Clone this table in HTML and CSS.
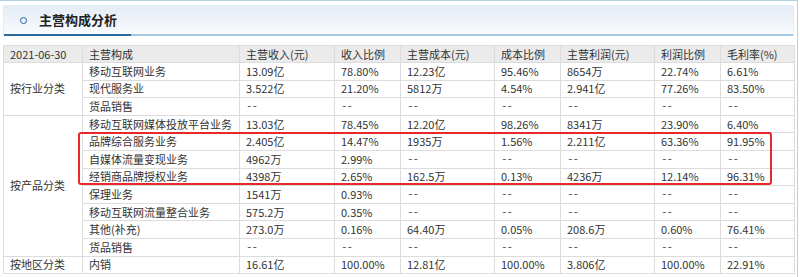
FILE: index.html
```html
<!DOCTYPE html>
<html lang="zh-CN">
<head>
<meta charset="utf-8">
<title>主营构成分析</title>
<link rel="stylesheet" href="styles.css">
</head>
<body>
<div class="frame">
  <div class="section-head">
    <span class="ring"></span>
    <h2 class="title">主营构成分析</h2>
  </div>
  <table class="grid">
    <colgroup>
      <col style="width:79px"><col style="width:157px"><col style="width:95px"><col style="width:66px"><col style="width:94px"><col style="width:66px"><col style="width:94px"><col style="width:66px"><col style="width:74px">
    </colgroup>
    <thead>
      <tr class="head-row"><th>2021-06-30</th><th>主营构成</th><th>主营收入(元)</th><th>收入比例</th><th>主营成本(元)</th><th>成本比例</th><th>主营利润(元)</th><th>利润比例</th><th>毛利率(%)</th></tr>
    </thead>
    <tbody>
      <tr><td class="cat" rowspan="3">按行业分类</td><td>移动互联网业务</td><td>13.09亿</td><td>78.80%</td><td>12.23亿</td><td>95.46%</td><td>8654万</td><td>22.74%</td><td>6.61%</td></tr>
      <tr><td>现代服务业</td><td>3.522亿</td><td>21.20%</td><td>5812万</td><td>4.54%</td><td>2.941亿</td><td>77.26%</td><td>83.50%</td></tr>
      <tr><td>货品销售</td><td class="nil">--</td><td class="nil">--</td><td class="nil">--</td><td class="nil">--</td><td class="nil">--</td><td class="nil">--</td><td class="nil">--</td></tr>
      <tr><td class="cat" rowspan="8">按产品分类</td><td>移动互联网媒体投放平台业务</td><td>13.03亿</td><td>78.45%</td><td>12.20亿</td><td>98.26%</td><td>8341万</td><td>23.90%</td><td>6.40%</td></tr>
      <tr><td>品牌综合服务业务</td><td>2.405亿</td><td>14.47%</td><td>1935万</td><td>1.56%</td><td>2.211亿</td><td>63.36%</td><td>91.95%</td></tr>
      <tr><td>自媒体流量变现业务</td><td>4962万</td><td>2.99%</td><td class="nil">--</td><td class="nil">--</td><td class="nil">--</td><td class="nil">--</td><td class="nil">--</td></tr>
      <tr><td>经销商品牌授权业务</td><td>4398万</td><td>2.65%</td><td>162.5万</td><td>0.13%</td><td>4236万</td><td>12.14%</td><td>96.31%</td></tr>
      <tr><td>保理业务</td><td>1541万</td><td>0.93%</td><td class="nil">--</td><td class="nil">--</td><td class="nil">--</td><td class="nil">--</td><td class="nil">--</td></tr>
      <tr><td>移动互联网流量整合业务</td><td>575.2万</td><td>0.35%</td><td class="nil">--</td><td class="nil">--</td><td class="nil">--</td><td class="nil">--</td><td class="nil">--</td></tr>
      <tr><td>其他(补充)</td><td>273.0万</td><td>0.16%</td><td>64.40万</td><td>0.05%</td><td>208.6万</td><td>0.60%</td><td>76.41%</td></tr>
      <tr><td>货品销售</td><td class="nil">--</td><td class="nil">--</td><td class="nil">--</td><td class="nil">--</td><td class="nil">--</td><td class="nil">--</td><td class="nil">--</td></tr>
      <tr><td class="cat">按地区分类</td><td>内销</td><td>16.61亿</td><td>100.00%</td><td>12.81亿</td><td>100.00%</td><td>3.806亿</td><td>100.00%</td><td>22.91%</td></tr>
    </tbody>
  </table>
  <div class="highlight"></div>
</div>
</body>
</html>
```

FILE: styles.css
```css
* { box-sizing: border-box; }
html, body { margin: 0; padding: 0; background: #ffffff; }
body {
  font-family: "Noto Sans CJK SC", "Noto Sans", sans-serif;
  color: #333333;
  overflow: hidden;
}
.frame {
  position: relative;
  width: 798px;
  height: 277px;
  border-top: 1px solid #b3d0e6;
  border-right: 1px solid #b3d0e6;
  padding: 4px 3px 0 3px;
}
.section-head {
  height: 31px;
  display: flex;
  align-items: center;
  padding: 0 0 2px 16px;
  border: 1px solid #e3ebf3;
  border-bottom: none;
  border-radius: 3px 3px 0 0;
  background:
    linear-gradient(#2c6c9c, #2c6c9c) left bottom / 127px 2px no-repeat,
    linear-gradient(#a3c7e1, #a3c7e1) left bottom / 100% 2px no-repeat,
    linear-gradient(#e4ecf5, #fbfcfe);
}
.ring {
  width: 7px;
  height: 7px;
  border: 1.6px solid #1d63a8;
  border-radius: 50%;
  margin-right: 12px;
}
.title {
  margin: 0;
  font-size: 13px;
  font-weight: bold;
  color: #222222;
  line-height: 16px;
}
.grid {
  margin-top: 9px;
  width: 791px;
  border-collapse: collapse;
  table-layout: fixed;
  font-size: 11px;
}
.grid th, .grid td {
  border: 1px solid #dcdcdc;
  padding: 0 0 0 6px;
  text-align: left;
  font-weight: normal;
  line-height: 15px;
  white-space: nowrap;
  overflow: hidden;
  vertical-align: middle;
}
.grid td.nil {
  font-family: "Liberation Mono", monospace;
  font-size: 11px;
  letter-spacing: -1.2px;
  color: #555555;
}
.head-row { height: 17px; background: #ebebeb; }
.grid tbody tr { height: 17.6px; }
.grid td.cat { background: #ffffff; }
.highlight {
  position: absolute;
  left: 78px;
  top: 131px;
  width: 694px;
  height: 53px;
  border: 2px solid #e8282b;
  border-radius: 3px;
  pointer-events: none;
}
```
